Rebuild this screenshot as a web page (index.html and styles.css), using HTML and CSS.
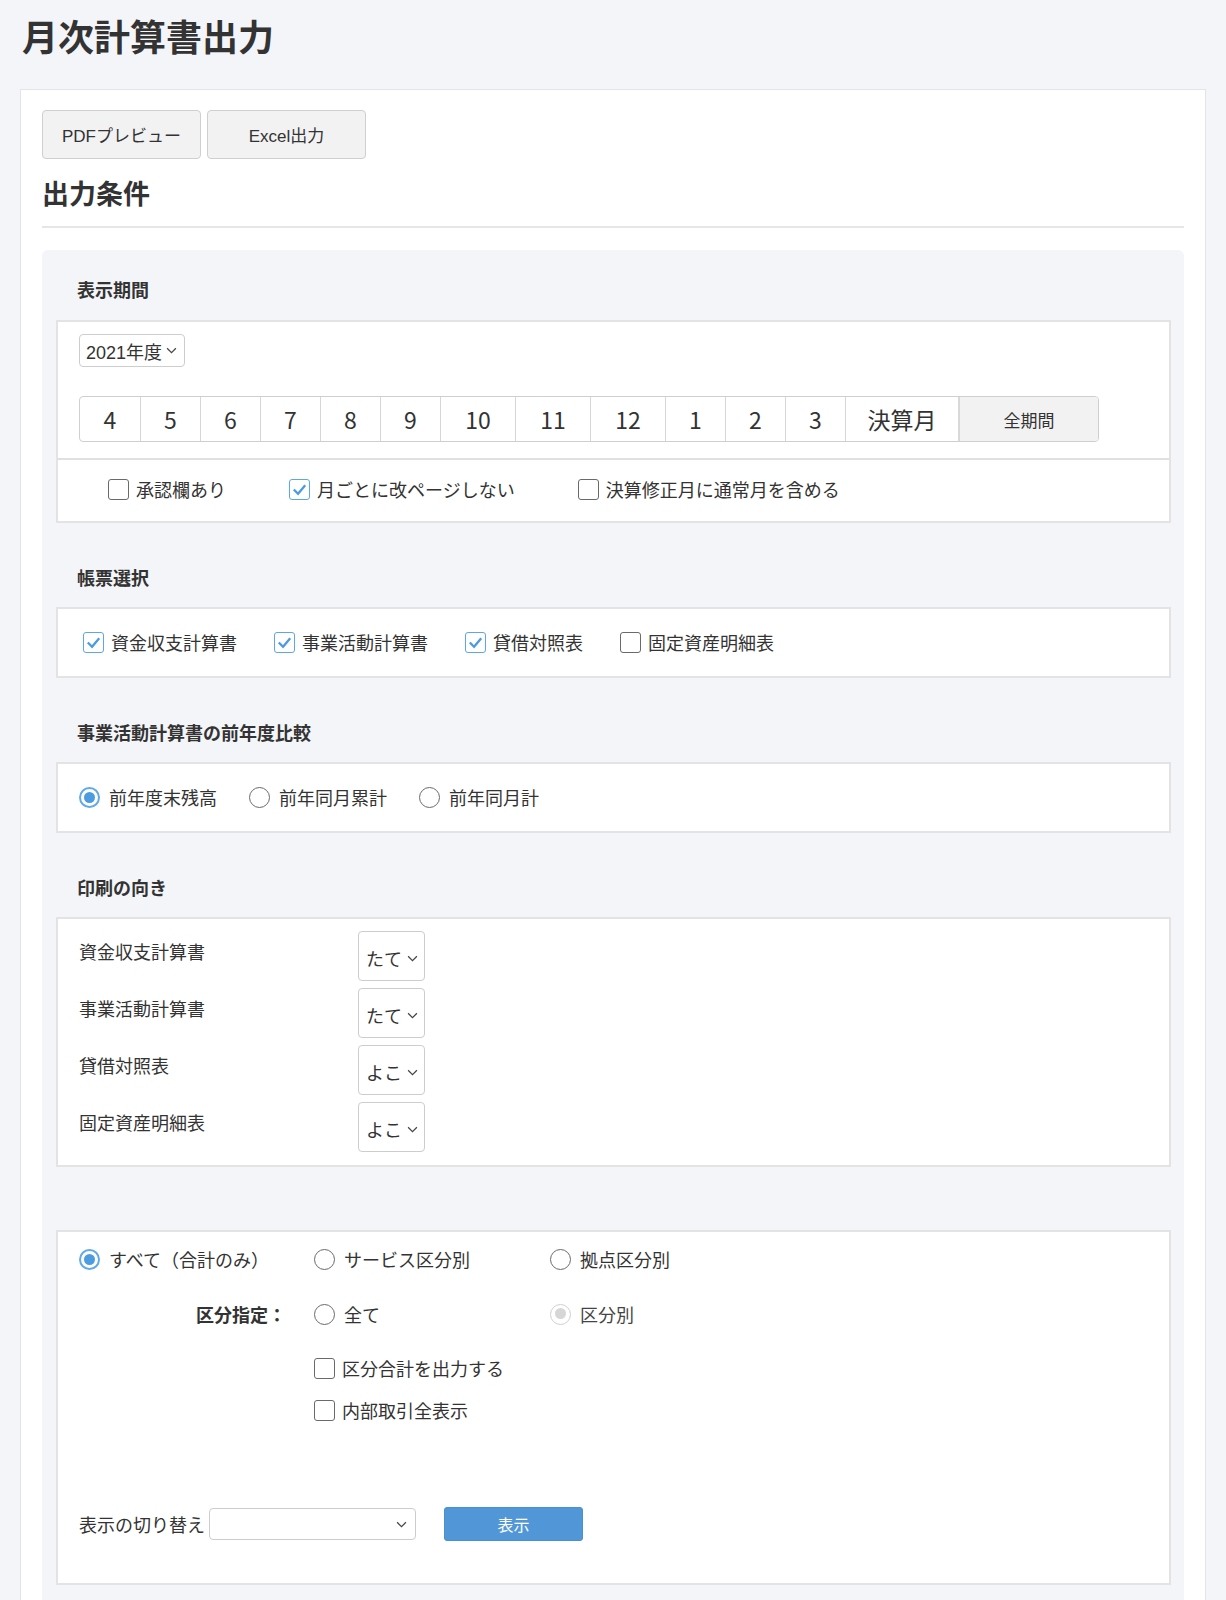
FILE: index.html
```html
<!DOCTYPE html>
<html lang="ja">
<head>
  <meta charset="UTF-8">
  <title>月次計算書出力</title>
  <link rel="stylesheet" href="styles.css">
</head>
<body>
  <h1 class="page-title">月次計算書出力</h1>
  <div class="panel">
    <div class="actions">
      <button class="btn">PDFプレビュー</button>
      <button class="btn">Excel出力</button>
    </div>
    <h2 class="panel-title">出力条件</h2>
    <hr class="divider">

    <div class="conditions">
      <!-- 表示期間 -->
      <div class="section-label first">表示期間</div>
      <div class="box period-box">
        <div class="period-top">
          <div class="select year-select">
            <span>2021年度</span>
            <svg class="chev" viewBox="0 0 10 6"><polyline points="1,1 5,5 9,1"/></svg>
          </div>
          <div class="months">
            <span class="month">4</span>
            <span class="month">5</span>
            <span class="month">6</span>
            <span class="month">7</span>
            <span class="month">8</span>
            <span class="month">9</span>
            <span class="month wide">10</span>
            <span class="month wide">11</span>
            <span class="month wide">12</span>
            <span class="month">1</span>
            <span class="month">2</span>
            <span class="month">3</span>
            <span class="month closing">決算月</span>
            <span class="month all">全期間</span>
          </div>
        </div>
        <div class="period-options">
          <label class="check"><span class="cb"></span>承認欄あり</label>
          <label class="check"><span class="cb on"><svg viewBox="0 0 20 20"><polyline points="4,10 8.5,14.5 16,5.5"/></svg></span>月ごとに改ページしない</label>
          <label class="check"><span class="cb"></span>決算修正月に通常月を含める</label>
        </div>
      </div>

      <!-- 帳票選択 -->
      <div class="section-label">帳票選択</div>
      <div class="box row-box report-box">
        <label class="check"><span class="cb on"><svg viewBox="0 0 20 20"><polyline points="4,10 8.5,14.5 16,5.5"/></svg></span>資金収支計算書</label>
        <label class="check"><span class="cb on"><svg viewBox="0 0 20 20"><polyline points="4,10 8.5,14.5 16,5.5"/></svg></span>事業活動計算書</label>
        <label class="check"><span class="cb on"><svg viewBox="0 0 20 20"><polyline points="4,10 8.5,14.5 16,5.5"/></svg></span>貸借対照表</label>
        <label class="check"><span class="cb"></span>固定資産明細表</label>
      </div>

      <!-- 前年度比較 -->
      <div class="section-label">事業活動計算書の前年度比較</div>
      <div class="box row-box compare-box">
        <label class="radio"><span class="rb on"></span>前年度末残高</label>
        <label class="radio"><span class="rb"></span>前年同月累計</label>
        <label class="radio"><span class="rb"></span>前年同月計</label>
      </div>

      <!-- 印刷の向き -->
      <div class="section-label">印刷の向き</div>
      <div class="box orient-box">
        <div class="orient-row">
          <span class="orient-name">資金収支計算書</span>
          <div class="select orient-select"><span>たて</span><svg class="chev" viewBox="0 0 10 6"><polyline points="1,1 5,5 9,1"/></svg></div>
        </div>
        <div class="orient-row">
          <span class="orient-name">事業活動計算書</span>
          <div class="select orient-select"><span>たて</span><svg class="chev" viewBox="0 0 10 6"><polyline points="1,1 5,5 9,1"/></svg></div>
        </div>
        <div class="orient-row">
          <span class="orient-name">貸借対照表</span>
          <div class="select orient-select"><span>よこ</span><svg class="chev" viewBox="0 0 10 6"><polyline points="1,1 5,5 9,1"/></svg></div>
        </div>
        <div class="orient-row">
          <span class="orient-name">固定資産明細表</span>
          <div class="select orient-select"><span>よこ</span><svg class="chev" viewBox="0 0 10 6"><polyline points="1,1 5,5 9,1"/></svg></div>
        </div>
      </div>

      <!-- 区分 -->
      <div class="box division-box">
        <div class="div-grid">
          <label class="radio"><span class="rb on"></span>すべて（合計のみ）</label>
          <label class="radio"><span class="rb"></span>サービス区分別</label>
          <label class="radio"><span class="rb"></span>拠点区分別</label>

          <span class="div-label">区分指定：</span>
          <label class="radio"><span class="rb"></span>全て</label>
          <label class="radio disabled"><span class="rb on off"></span>区分別</label>
        </div>
        <div class="div-checks">
          <label class="check"><span class="cb"></span>区分合計を出力する</label>
          <label class="check"><span class="cb"></span>内部取引全表示</label>
        </div>
        <div class="switch-row">
          <span class="switch-label">表示の切り替え</span>
          <div class="select switch-select"><span></span><svg class="chev" viewBox="0 0 10 6"><polyline points="1,1 5,5 9,1"/></svg></div>
          <button class="btn-primary">表示</button>
        </div>
      </div>
    </div>
  </div>
</body>
</html>
```

FILE: styles.css
```css
* {
  box-sizing: border-box;
}

body {
  margin: 0;
  background-color: #f3f5f8;
  color: #333;
  font-family: "Liberation Sans", "Noto Sans CJK JP", sans-serif;
  font-size: 18px;
}

.page-title {
  margin: 0;
  padding: 15px 22px 0;
  font-size: 36px;
  line-height: 48px;
  font-weight: bold;
}

.panel {
  margin: 26px 20px 0;
  padding: 20px 21px 0;
  background-color: #fff;
  border: 1px solid #e2e4e7;
}

.actions {
  display: flex;
  gap: 6px;
}

.btn {
  width: 159px;
  height: 49px;
  background-color: #f2f2f2;
  border: 1px solid #cfcfcf;
  border-radius: 4px;
  color: #333;
  font-family: inherit;
  font-size: 17px;
}

.panel-title {
  margin: 18px 0 13px;
  font-size: 27px;
  line-height: 36px;
  font-weight: bold;
}

.divider {
  margin: 0;
  border: none;
  border-top: 2px solid #e6e6e6;
}

.conditions {
  margin-top: 22px;
  padding: 0 13px 30px 14px;
  background-color: #f3f5f8;
  border-radius: 6px 6px 0 0;
}

.section-label {
  padding: 43px 0 15px 21px;
  font-size: 18px;
  line-height: 26px;
  font-weight: bold;
}

.section-label.first {
  padding-top: 28px;
  padding-bottom: 16px;
}

.box {
  background-color: #fff;
  border: 2px solid #e3e3e3;
}

/* selects */
.select {
  display: flex;
  align-items: center;
  justify-content: space-between;
  background-color: #fff;
  border: 1px solid #cdcdcd;
  border-radius: 4px;
  font-size: 18px;
}

.chev {
  width: 11px;
  height: 7px;
  fill: none;
  stroke: #444;
  stroke-width: 1.1;
}

.year-select {
  width: 106px;
  height: 33px;
  padding: 0 7px 0 6px;
}

/* period */
.period-top {
  padding: 12px 21px 16px;
  border-bottom: 2px solid #e0e0e0;
}

.months {
  display: inline-flex;
  margin-top: 29px;
  height: 46px;
  border: 1px solid #cfcfcf;
  border-radius: 4px;
  overflow: hidden;
}

.month {
  display: flex;
  align-items: center;
  justify-content: center;
  width: 60px;
  border-left: 1px solid #d6d6d6;
  font-family: "Noto Sans CJK JP", sans-serif;
  font-size: 23px;
}

.month:first-child {
  border-left: none;
}

.month.wide {
  width: 75px;
}

.month.closing {
  width: 113px;
}

.month.all {
  width: 140px;
  background-color: #f2f2f2;
  border-left: 2px solid #d8d8d8;
  font-size: 17px;
}

.period-options {
  display: flex;
  gap: 63px;
  padding: 16px 0 19px 50px;
}

/* checkbox and radio */
.check,
.radio {
  display: flex;
  align-items: center;
  line-height: 26px;
  font-family: "Noto Sans CJK JP", sans-serif;
  font-size: 18px;
  white-space: nowrap;
}

.cb {
  flex: none;
  width: 21px;
  height: 21px;
  margin-right: 7px;
  border: 1.5px solid #6a6a6a;
  border-radius: 3px;
  background-color: #fff;
}

.cb.on {
  border-color: #5ea6e6;
}

.cb svg {
  display: block;
  width: 100%;
  height: 100%;
  fill: none;
  stroke: #4b9be0;
  stroke-width: 2.4;
}

.rb {
  flex: none;
  position: relative;
  width: 21px;
  height: 21px;
  margin-right: 9px;
  border: 1.5px solid #6a6a6a;
  border-radius: 50%;
  background-color: #fff;
}

.rb.on {
  border: 2px solid #62a9e8;
}

.rb.on::after {
  content: "";
  position: absolute;
  top: 3px;
  left: 3px;
  width: 11px;
  height: 11px;
  border-radius: 50%;
  background-color: #4d9be0;
}

.rb.off {
  border: 1.5px solid #cfcfcf;
}

.rb.off::after {
  top: 3.5px;
  left: 3.5px;
  background-color: #d6d6d6;
}

.row-box {
  display: flex;
  padding: 20px 0 21px 25px;
}

.report-box {
  gap: 37px;
}

.compare-box {
  gap: 32px;
  padding-left: 21px;
}

/* orientation */
.orient-box {
  display: flex;
  flex-direction: column;
  gap: 7px;
  padding: 12px 21px 13px;
}

.orient-row {
  display: flex;
  align-items: flex-start;
}

.orient-name {
  width: 279px;
  padding-top: 7px;
  line-height: 26px;
  font-family: "Noto Sans CJK JP", sans-serif;
}

.orient-select {
  width: 67px;
  height: 50px;
  padding: 4px 6px 0 7px;
}

/* division */
.division-box {
  margin-top: 63px;
  padding: 14px 21px 42px;
}

.div-grid {
  display: grid;
  grid-template-columns: 235px 236px auto;
  row-gap: 29px;
}

.div-label {
  padding-right: 28px;
  text-align: right;
  line-height: 26px;
  font-family: "Noto Sans CJK JP", sans-serif;
  font-weight: bold;
}

.radio.disabled {
  color: #444;
}

.div-checks {
  display: flex;
  flex-direction: column;
  gap: 16px;
  margin-top: 28px;
  padding-left: 235px;
}

.switch-row {
  display: flex;
  align-items: center;
  margin-top: 84px;
  height: 34px;
}

.switch-label {
  margin-right: 4px;
  font-family: "Noto Sans CJK JP", sans-serif;
}

.switch-select {
  width: 207px;
  height: 32px;
  padding: 0 8px;
}

.btn-primary {
  width: 139px;
  height: 34px;
  margin-left: 28px;
  background-color: #5197d7;
  border: 1px solid #4a8fd0;
  border-radius: 3px;
  color: #fff;
  font-family: "Noto Sans CJK JP", sans-serif;
  font-size: 16px;
}
```
